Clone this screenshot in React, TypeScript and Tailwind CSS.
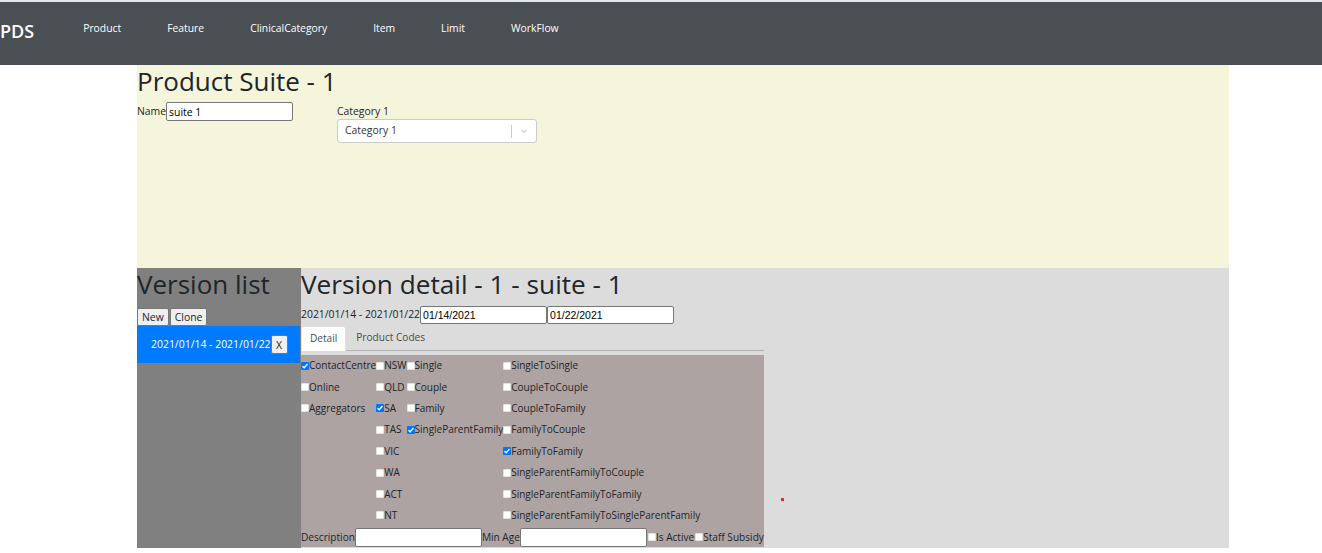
import React from "react";

const navItems = ["Product", "Feature", "ClinicalCategory", "Item", "Limit", "WorkFlow"];

const Check: React.FC<{ checked?: boolean }> = ({ checked }) =>
  checked ? (
    <span className="inline-flex h-[8px] w-[8px] shrink-0 items-center justify-center rounded-[1px] bg-[#0075ff]">
      <svg viewBox="0 0 8 8" className="h-[8px] w-[8px]">
        <path d="M1.5 4.2 L3.2 5.8 L6.5 2" fill="none" stroke="#fff" strokeWidth="1.3" />
      </svg>
    </span>
  ) : (
    <span className="inline-block h-[8px] w-[8px] shrink-0 rounded-[1px] border border-[#e2e2e2] bg-white" />
  );

type Opt = { label: string; checked?: boolean } | null;

const channels: Opt[] = [
  { label: "ContactCentre", checked: true },
  { label: "Online" },
  { label: "Aggregators" },
];
const states: Opt[] = [
  { label: "NSW" },
  { label: "QLD" },
  { label: "SA", checked: true },
  { label: "TAS" },
  { label: "VIC" },
  { label: "WA" },
  { label: "ACT" },
  { label: "NT" },
];
const memberships: Opt[] = [
  { label: "Single" },
  { label: "Couple" },
  { label: "Family" },
  { label: "SingleParentFamily", checked: true },
];
const transitions: Opt[] = [
  { label: "SingleToSingle" },
  { label: "CoupleToCouple" },
  { label: "CoupleToFamily" },
  { label: "FamilyToCouple" },
  { label: "FamilyToFamily", checked: true },
  { label: "SingleParentFamilyToCouple" },
  { label: "SingleParentFamilyToFamily" },
  { label: "SingleParentFamilyToSingleParentFamily" },
];

const CheckColumn: React.FC<{ items: Opt[] }> = ({ items }) => (
  <div className="flex flex-col">
    {items.map((it, i) => (
      <div key={i} className="flex h-[21.4px] items-center">
        {it && (
          <>
            <Check checked={it.checked} />
            <span className="whitespace-nowrap">{it.label}</span>
          </>
        )}
      </div>
    ))}
  </div>
);

export default function App() {
  return (
    <div className="min-h-[553px] bg-white font-['Open_Sans',sans-serif] text-[10.4px] text-[#212529]">
      <div className="h-[2px] bg-[#e6e6e6]" />
      <nav className="flex h-[63px] items-start bg-[#4a4f54] text-white">
        <span className="pt-[17px] text-[18px] leading-[25px] font-semibold">PDS</span>
        <ul className="ml-[49px] flex gap-[46px] pt-[19px] text-[10.35px] leading-[14px]">
          {navItems.map((n) => (
            <li key={n}>{n}</li>
          ))}
        </ul>
      </nav>

      <main className="ml-[137px] w-[1092px]">
        <section className="h-[203px] bg-[#f5f5dc]">
          <h1 className="mb-[5px] text-[26px] leading-[32px] font-normal">Product Suite - 1</h1>
          <div className="flex">
            <div className="flex h-[19px] w-[200px] items-center">
              <span>Name</span>
              <input
                readOnly
                value="suite 1"
                className="h-[19px] w-[127px] rounded-[2px] border border-[#767676] bg-white px-[2px] text-[10.4px] text-black outline-none"
              />
            </div>
            <div className="w-[200px] pt-[1px]">
              <div className="leading-[16px]">Category 1</div>
              <div className="flex h-[24px] items-center rounded-[3px] border border-[#cccccc] bg-white">
                <span className="flex-1 pl-[7px] text-[#333333]">Category 1</span>
                <span className="h-[13px] w-px bg-[#cccccc]" />
                <span className="flex w-[24px] items-center justify-center">
                  <svg viewBox="0 0 20 20" className="h-[10px] w-[10px]" fill="#cccccc">
                    <path d="M4.516 7.548c0.436-0.446 1.043-0.481 1.576 0l3.908 3.747 3.908-3.747c0.533-0.481 1.141-0.446 1.574 0 0.436 0.445 0.408 1.197 0 1.615-0.406 0.418-4.695 4.502-4.695 4.502-0.217 0.223-0.502 0.335-0.787 0.335s-0.57-0.112-0.789-0.335c0 0-4.287-4.084-4.695-4.502s-0.436-1.17 0-1.615z" />
                  </svg>
                </span>
              </div>
            </div>
          </div>
        </section>

        <section className="flex h-[280px]">
          <div className="w-[164px] bg-[#808080]">
            <h1 className="mb-[8px] text-[26px] leading-[32px] font-normal">Version list</h1>
            <div className="flex gap-[1px]">
              <button className="h-[18px] rounded-[2px] border border-[#767676] bg-[#efefef] px-[4px] leading-[14px]">
                New
              </button>
              <button className="h-[18px] rounded-[2px] border border-[#767676] bg-[#efefef] px-[4px] leading-[14px]">
                Clone
              </button>
            </div>
            <div className="mr-px flex h-[37px] items-center bg-[#007bff] pl-[14px] text-white">
              <span className="text-[10.45px] whitespace-nowrap">2021/01/14 - 2021/01/22</span>
              <button className="h-[19px] w-[17px] rounded-[2px] border border-[#767676] bg-[#efefef] text-[#212529] leading-[14px]">
                X
              </button>
            </div>
          </div>

          <div className="relative flex-1 bg-[#dcdcdc]">
            <h1 className="mb-[6px] text-[26.2px] leading-[32px] font-normal whitespace-nowrap">
              Version detail - 1 - suite - 1
            </h1>
            <div className="w-fit">
              <div className="flex h-[18px] items-center">
                <span className="text-[10.4px] whitespace-nowrap">2021/01/14 - 2021/01/22</span>
                <input
                  readOnly
                  value="01/14/2021"
                  className="h-[18px] w-[127px] rounded-[2px] border border-[#767676] bg-white px-[2px] font-['Liberation_Sans',sans-serif] text-[10.5px] text-black outline-none"
                />
                <input
                  readOnly
                  value="01/22/2021"
                  className="h-[18px] w-[127px] rounded-[2px] border border-[#767676] bg-white px-[2px] font-['Liberation_Sans',sans-serif] text-[10.5px] text-black outline-none"
                />
              </div>
              <div className="mt-[2px] flex h-[25px] border-b border-[#b4b4b4] text-[10.1px]">
                <div className="-mb-px flex items-center rounded-t-[3px] border border-[#dee2e6] border-b-0 bg-white px-[8px] text-[#495057]">
                  Detail
                </div>
                <div className="flex items-center px-[10px] text-[#4a4a4a]">Product Codes</div>
              </div>
              <div className="mt-[5px] h-[192px] bg-[#ada3a3] text-[10px]">
                <div className="-mt-px flex">
                  <CheckColumn items={channels} />
                  <CheckColumn items={states} />
                  <CheckColumn items={memberships} />
                  <CheckColumn items={transitions} />
                </div>
                <div className="mt-px flex h-[20px] items-center text-[10.1px] whitespace-nowrap">
                  <span>Description</span>
                  <input
                    readOnly
                    className="h-[19px] w-[127px] rounded-[2px] border border-[#767676] bg-white outline-none"
                  />
                  <span>Min Age</span>
                  <input
                    readOnly
                    className="h-[19px] w-[127px] rounded-[2px] border border-[#767676] bg-white outline-none"
                  />
                  <span className="ml-px flex">
                    <Check />
                  </span>
                  <span>Is Active</span>
                  <span className="ml-px flex">
                    <Check />
                  </span>
                  <span>Staff Subsidy</span>
                </div>
              </div>
            </div>
            <span className="absolute top-[230px] left-[480px] h-[3px] w-[3px] bg-[#ff2020]" />
          </div>
        </section>
      </main>
    </div>
  );
}
